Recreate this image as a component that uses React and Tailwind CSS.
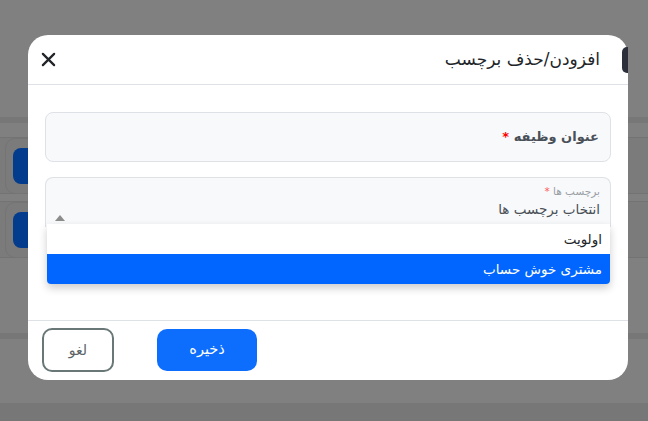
import React from 'react';

const font = { fontFamily: '"DejaVu Sans", "Noto Sans", sans-serif' };

const BgCard = () => (
  <div className="h-[57px] border-y border-[#737373] bg-[#7b7b7b] flex items-center pl-[5px]">
    <div className="w-[25px] h-[56px] rounded-l-[10px] border border-[#747474] flex items-center pl-[7px]">
      <div className="w-[16px] h-[36px] rounded-l-[8px] bg-[#033c8c]" />
    </div>
  </div>
);

const Background = () => (
  <div className="w-full h-full flex flex-col">
    <div className="h-[117px]" />
    <div className="h-[6px] bg-[#777777]" />
    <div className="h-[14px]" />
    <BgCard />
    <div className="h-[7px]" />
    <BgCard />
    <div className="h-[75px]" />
    <div className="h-[6px] bg-[#777777]" />
    <div className="h-[64px]" />
    <div className="flex-1 bg-[#777777]" />
  </div>
);

const Modal = () => (
  <div
    dir="rtl"
    className="absolute left-[28px] top-[35px] w-[600px] h-[345px] bg-white rounded-[20px] flex flex-col"
    style={font}
  >
    <div className="absolute right-0 top-[12px] w-[6px] h-[26px] rounded-l-[5px] bg-[#2b303b]" />

    <div className="h-[50px] border-b border-[#dee2e6] flex items-center justify-between pr-[28px] pl-[12px]">
      <h2 className="text-[17px] text-[#212529] leading-none">افزودن/حذف برچسب</h2>
      <button className="w-[16px] h-[16px] flex items-center justify-center text-[#212529]">
        <svg width="15" height="15" viewBox="0 0 16 16" fill="none" stroke="currentColor" strokeWidth="2.4" strokeLinecap="round">
          <path d="M2 2 L14 14 M14 2 L2 14" />
        </svg>
      </button>
    </div>

    <div className="flex-1 px-[17px] pt-[27px] flex flex-col gap-[15px]">
      <div className="h-[50px] rounded-[8px] border border-[#dee2e6] bg-[#f8f9fa] flex items-center pr-[11px]">
        <span className="text-[13px] text-[#495057] font-bold">
          عنوان وظیفه <span className="text-[#ff0000]">*</span>
        </span>
      </div>

      <div className="relative">
        <div className="h-[50px] rounded-t-[8px] border border-b-0 border-[#dee2e6] bg-[#f8f9fa] flex flex-col pr-[10px] pt-[6px] relative">
          <span className="text-[10.5px] text-[#9aa0a6] leading-[14px]">
            برچسب ها <span className="text-[#ff5a5a]">*</span>
          </span>
          <span className="text-[13.5px] text-[#495057] leading-[20px] mt-[1px]">انتخاب برچسب ها</span>
          <svg className="absolute left-[9px] top-[37px]" width="10" height="6" viewBox="0 0 10 6">
            <path d="M0 6 L5 0 L10 6 Z" fill="#8c8c8c" />
          </svg>
        </div>
        <div className="absolute left-[2px] right-[1px] top-[47px] bg-white rounded-b-[4px] overflow-hidden shadow-[0_4px_8px_rgba(0,0,0,0.2)]">
          <div className="h-[30px] flex items-center pr-[8px] text-[13.5px] text-[#212529]">اولویت</div>
          <div className="h-[30px] flex items-center pr-[8px] text-[13.5px] text-white bg-[#0066ff]">مشتری خوش حساب</div>
        </div>
      </div>
    </div>

    <div className="h-[60px] border-t border-[#dee2e6] flex items-center pl-[14px] gap-[43px] justify-end pb-[1px]">
      <button className="w-[100px] h-[42px] rounded-[10px] bg-[#0d6efd] text-white text-[14.5px]">ذخیره</button>
      <button className="w-[72px] h-[44px] rounded-[10px] border-2 border-[#6a7777] bg-white text-[#5b6366] text-[14px]">لغو</button>
    </div>
  </div>
);

export default function App() {
  return (
    <div className="relative w-[648px] h-[421px] overflow-hidden bg-[#808080]">
      <Background />
      <Modal />
    </div>
  );
}
